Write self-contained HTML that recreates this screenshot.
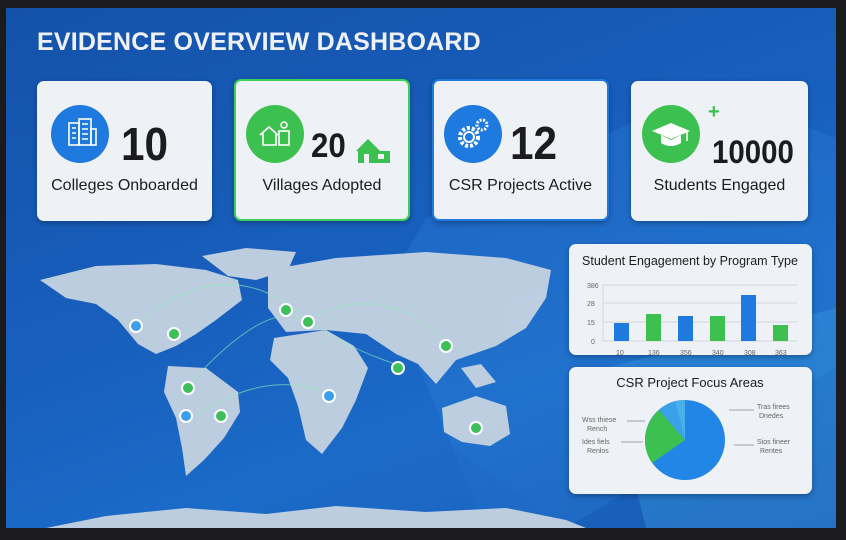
<!DOCTYPE html>
<html><head><meta charset="utf-8"><style>
*{margin:0;padding:0;box-sizing:border-box}
body{width:846px;height:540px;background:#1b1b1d;position:relative;overflow:hidden;font-family:"Liberation Sans",sans-serif}
.scr{position:absolute;left:6px;top:8px;width:830px;height:520px;background:linear-gradient(160deg,#1452aa 0%,#185fbd 45%,#1b6bc8 70%,#1858b0 100%);overflow:hidden}
h1{position:absolute;left:31px;top:20px;color:#eef2f8;font-size:25px;font-weight:bold;letter-spacing:0.2px}
.card{position:absolute;top:73px;height:140px;background:#eef1f5;border-radius:7px;box-shadow:0 2px 6px rgba(0,0,0,.3)}
.ic{position:absolute;width:58px;height:58px;border-radius:50%;top:24px}
.num{position:absolute;font-weight:bold;color:#1c1c1e;transform:scaleX(.92);transform-origin:left}
.lab{position:absolute;left:0;right:0;top:96px;text-align:center;font-size:16px;color:#1c1c1e}
.panel{position:absolute;left:563px;width:243px;background:#eef1f5;border-radius:7px;box-shadow:0 2px 6px rgba(0,0,0,.3)}
.sm{font-size:7px;fill:#666}
</style></head><body>
<div class="scr">
<svg width="830" height="520" style="position:absolute;left:0;top:0">
<polygon points="420,210 700,80 830,130 830,360 560,520 480,520 380,280" fill="#2a7fd6" opacity=".35"/>
<polygon points="600,360 830,300 830,520 640,520" fill="#3a9be0" opacity=".4"/>
<polygon points="290,520 420,420 560,520" fill="#1e6ac6" opacity=".5"/>
<g fill="#c6d3e2" opacity=".95">
<path d="M34,272 L90,258 L150,256 L200,262 L232,272 L236,292 L210,312 L190,326 L170,338 L150,346 L132,336 L112,312 L90,296 L60,290Z"/>
<path d="M196,248 L240,240 L290,244 L282,262 L250,272 L222,268Z"/>
<path d="M162,358 L200,360 L232,384 L234,404 L218,430 L198,452 L180,468 L176,440 L170,410 L158,384Z"/>
<path d="M262,262 L330,250 L420,244 L500,250 L545,262 L540,290 L520,320 L490,338 L450,352 L430,376 L412,356 L390,346 L360,326 L320,322 L280,324 L262,300Z"/>
<path d="M268,330 L320,322 L348,338 L362,360 L350,392 L336,420 L316,446 L300,432 L292,398 L282,370 L264,352Z"/>
<path d="M436,400 L470,388 L500,398 L504,426 L484,438 L456,434 L438,424Z"/>
<path d="M455,360 L475,356 L490,374 L470,380Z"/>
<path d="M40,520 L100,508 L180,500 L260,506 L330,498 L420,504 L500,500 L560,512 L580,520Z"/>
</g>
<g fill="none" stroke="#8ff0b8" stroke-width="1" opacity=".6">
<path d="M130,316 Q220,240 300,310"/><path d="M180,380 Q260,290 300,312"/><path d="M300,312 Q380,270 440,336"/><path d="M300,312 Q340,340 395,358"/><path d="M185,410 Q260,360 320,385"/>
</g>
<g>
<circle cx="130" cy="318" r="6" fill="#3aa0f0" stroke="#fff" stroke-width="2"/>
<circle cx="168" cy="326" r="6" fill="#3dc05a" stroke="#fff" stroke-width="2"/>
<circle cx="182" cy="380" r="6" fill="#3dc05a" stroke="#fff" stroke-width="2"/>
<circle cx="180" cy="408" r="6" fill="#3aa0f0" stroke="#fff" stroke-width="2"/>
<circle cx="215" cy="408" r="6" fill="#3dc05a" stroke="#fff" stroke-width="2"/>
<circle cx="280" cy="302" r="6" fill="#3dc05a" stroke="#fff" stroke-width="2"/>
<circle cx="302" cy="314" r="6" fill="#3dc05a" stroke="#fff" stroke-width="2"/>
<circle cx="323" cy="388" r="6" fill="#3aa0f0" stroke="#fff" stroke-width="2"/>
<circle cx="392" cy="360" r="6" fill="#3dc05a" stroke="#fff" stroke-width="2"/>
<circle cx="440" cy="338" r="6" fill="#3dc05a" stroke="#fff" stroke-width="2"/>
<circle cx="470" cy="420" r="6" fill="#3dc05a" stroke="#fff" stroke-width="2"/>
</g>
</svg>
<h1>EVIDENCE OVERVIEW DASHBOARD</h1>
<div class="card" style="left:31px;width:175px">
 <div class="ic" style="left:14px;background:#1f7ae0"><svg width="58" height="58"><g fill="none" stroke="#fff" stroke-width="1.6"><rect x="18" y="18" width="10" height="22"/><rect x="28" y="14" width="12" height="26"/><rect x="40" y="24" width="5" height="16"/><path d="M21,23h4M21,28h4M21,33h4M31,19h6M31,24h6M31,29h6M31,34h6"/></g></svg></div>
 <div class="num" style="left:84px;top:36px;font-size:46px">10</div>
 <div class="lab">Colleges Onboarded</div>
</div>
<div class="card" style="left:228px;width:176px;top:71px;height:142px;border:2px solid #3ccf5a">
 <div class="ic" style="left:10px;top:24px;background:#3cc150"><svg width="58" height="58"><g fill="none" stroke="#fff" stroke-width="1.6"><path d="M14,30 L23,22 L32,30 M17,28 V40 H30 V28"/><rect x="33" y="26" width="10" height="14"/><circle cx="38" cy="20" r="3"/></g></svg></div>
 <div class="num" style="left:75px;top:46px;font-size:34px">20</div>
 <svg style="position:absolute;left:118px;top:56px" width="38" height="28"><path d="M2,14 L14,2 L26,14 L36,14 L36,26 L4,26 L4,14Z" fill="#3cc150"/><rect x="10" y="17" width="5" height="9" fill="#eef1f5"/><rect x="24" y="17" width="6" height="5" fill="#eef1f5"/></svg>
 <div class="lab" style="top:96px">Villages Adopted</div>
</div>
<div class="card" style="left:426px;width:177px;top:71px;height:142px;border:2px solid #1f7ae0">
 <div class="ic" style="left:10px;top:24px;background:#1f7ae0"><svg width="58" height="58"><g fill="none" stroke="#fff" stroke-width="2"><circle cx="25" cy="32" r="9" stroke-dasharray="3 2" stroke-width="4"/><circle cx="25" cy="32" r="5"/><circle cx="38" cy="20" r="5" stroke-dasharray="2 1.5" stroke-width="3"/></g></svg></div>
 <div class="num" style="left:76px;top:35px;font-size:46px">12</div>
 <div class="lab" style="top:96px">CSR Projects Active</div>
</div>
<div class="card" style="left:625px;width:177px">
 <div class="ic" style="left:11px;background:#3cc150"><svg width="58" height="58"><path d="M10,26 L29,18 L48,26 L29,34Z" fill="#fff"/><path d="M19,30 V38 Q29,44 39,38 V30 L29,35Z" fill="#fff"/><path d="M45,27 V36" stroke="#fff" stroke-width="1.5"/></svg></div>
 <div style="position:absolute;left:77px;top:20px;font-size:20px;font-weight:bold;color:#3cc150">+</div>
 <div class="num" style="left:81px;top:53px;font-size:32px">10000</div>
 <div class="lab">Students Engaged</div>
</div>
<div class="panel" style="top:236px;height:111px">
 <svg width="243" height="111">
 <text x="121" y="21" text-anchor="middle" font-size="12.5" fill="#1c1c1e">Student Engagement by Program Type</text>
 <g stroke="#c8ced6" stroke-width=".7"><line x1="34" y1="41" x2="228" y2="41"/><line x1="34" y1="59" x2="228" y2="59"/><line x1="34" y1="78" x2="228" y2="78"/><line x1="34" y1="97" x2="228" y2="97"/><line x1="34" y1="41" x2="34" y2="97"/></g>
 <g class="sm"><text x="18" y="44">386</text><text x="18" y="62">28</text><text x="18" y="81">15</text><text x="22" y="100">0</text>
 <text x="47" y="111">10</text><text x="79" y="111">136</text><text x="111" y="111">356</text><text x="143" y="111">340</text><text x="175" y="111">308</text><text x="206" y="111">363</text></g>
 <rect x="45" y="79" width="15" height="18" fill="#1f7ae0"/><rect x="77" y="70" width="15" height="27" fill="#3cc150"/><rect x="109" y="72" width="15" height="25" fill="#1f7ae0"/><rect x="141" y="72" width="15" height="25" fill="#3cc150"/><rect x="172" y="51" width="15" height="46" fill="#1f7ae0"/><rect x="204" y="81" width="15" height="16" fill="#3cc150"/>
 </svg>
</div>
<div class="panel" style="top:359px;height:127px">
 <svg width="243" height="127">
 <text x="121" y="20" text-anchor="middle" font-size="13" fill="#1c1c1e">CSR Project Focus Areas</text>
 <circle cx="116" cy="73" r="40" fill="#2286e6"/>
 <path d="M116,73 L83,96 A40,40 0 0 1 90,43Z" fill="#3cc150"/>
 <path d="M116,73 L90,43 A40,40 0 0 1 106,34Z" fill="#3aa0e8"/>
 <path d="M116,73 L106,34 A40,40 0 0 1 116,33Z" fill="#4ab0ea"/>
 <g stroke="#888" stroke-width=".7"><line x1="58" y1="54" x2="76" y2="54"/><line x1="52" y1="75" x2="74" y2="75"/><line x1="160" y1="43" x2="185" y2="43"/><line x1="165" y1="78" x2="185" y2="78"/></g>
 <g class="sm"><text x="13" y="55">Wss thiese</text><text x="18" y="64">Rench</text><text x="13" y="77">Ides fiels</text><text x="18" y="86">Renlos</text><text x="188" y="42">Tras firees</text><text x="190" y="51">Dnedes</text><text x="188" y="77">Sios fineer</text><text x="191" y="86">Rentes</text></g>
 </svg>
</div>
</div>
</body></html>
